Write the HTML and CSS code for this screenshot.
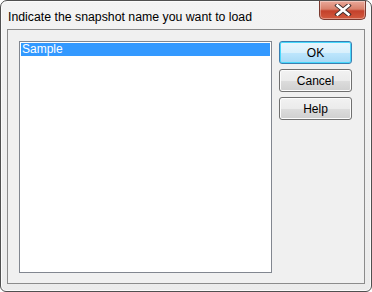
FILE: index.html
```html
<!DOCTYPE html>
<html lang="en">
  <head>
    <meta charset="UTF-8" />
    <title>Load snapshot</title>
    <link rel="stylesheet" href="styles.css">
  </head>
  <body>
    <div class="window">
      <div class="titlebar">
        <span class="title">Indicate the snapshot name you want to load</span>
        <div class="close">
          <svg width="20" height="12" viewBox="0 0 20 12">
            <path d="M4.5 1.5 L15.5 10.5 M15.5 1.5 L4.5 10.5" stroke="#3a2a2a" stroke-width="4.4" stroke-linecap="square"/>
            <path d="M4.5 1.5 L15.5 10.5 M15.5 1.5 L4.5 10.5" stroke="#ffffff" stroke-width="2.6" stroke-linecap="square"/>
          </svg>
        </div>
      </div>
      <div class="client">
        <div class="listbox">
          <div class="item selected">Sample</div>
        </div>
        <div class="buttons">
          <button class="btn default">OK</button>
          <button class="btn">Cancel</button>
          <button class="btn">Help</button>
        </div>
      </div>
    </div>
  </body>
</html>
```

FILE: styles.css
```css
body {
  margin: 0;
  background: #ffffff;
  font-family: "Liberation Sans", Arial, sans-serif;
}
.window {
  width: 372px;
  height: 292px;
  box-sizing: border-box;
  border: 1px solid #505050;
  border-radius: 7px 7px 6px 6px;
  background: linear-gradient(#f3f3f3, #ebebeb);
  box-shadow: inset 0 0 0 1px #fbfbfb;
  display: flex;
  flex-direction: column;
}
.titlebar {
  height: 28px;
  display: flex;
  align-items: flex-start;
  justify-content: space-between;
}
.title {
  font-size: 12.3px;
  color: #000000;
  margin: 9px 0 0 7px;
}
.close {
  width: 47px;
  height: 19px;
  margin-right: 5px;
  box-sizing: border-box;
  border: 1px solid #7a3a30;
  border-top: none;
  border-radius: 0 0 5px 5px;
  background: linear-gradient(#eaa99a 0%, #d8806b 45%, #c4412b 55%, #d25a3f 100%);
  box-shadow: inset 0 0 0 1px rgba(255, 255, 255, 0.35);
  display: flex;
  align-items: center;
  justify-content: center;
}
.client {
  flex: 1;
  margin: 0 6px 7px 6px;
  border: 1px solid #8b8b8b;
  background: #f0f0f0;
  display: flex;
  align-items: flex-start;
  padding: 11px 0 0 11px;
}
.listbox {
  width: 253px;
  height: 232px;
  box-sizing: border-box;
  border: 1px solid #828790;
  background: #ffffff;
  padding: 1px;
}
.item {
  font-size: 12px;
  height: 13px;
  line-height: 13px;
  padding-left: 1px;
}
.selected {
  background: #3399ff;
  color: #ffffff;
}
.buttons {
  display: flex;
  flex-direction: column;
  gap: 5px;
  margin-left: 7px;
}
.btn {
  width: 73px;
  height: 23px;
  box-sizing: border-box;
  border: 1px solid #707070;
  border-radius: 3px;
  background: linear-gradient(#f2f2f2 0%, #ebebeb 50%, #dddddd 51%, #cfcfcf 100%);
  box-shadow: inset 0 0 0 1px #fcfcfc;
  font-family: "Liberation Sans", Arial, sans-serif;
  font-size: 12px;
  color: #000000;
  padding: 0;
}
.default {
  border-color: #3c7fb1;
  background: linear-gradient(#eaf6fd 0%, #d9f0fc 50%, #bee6fd 51%, #a7d9f5 100%);
  box-shadow: inset 0 0 0 1px #48d8fb;
}
```
